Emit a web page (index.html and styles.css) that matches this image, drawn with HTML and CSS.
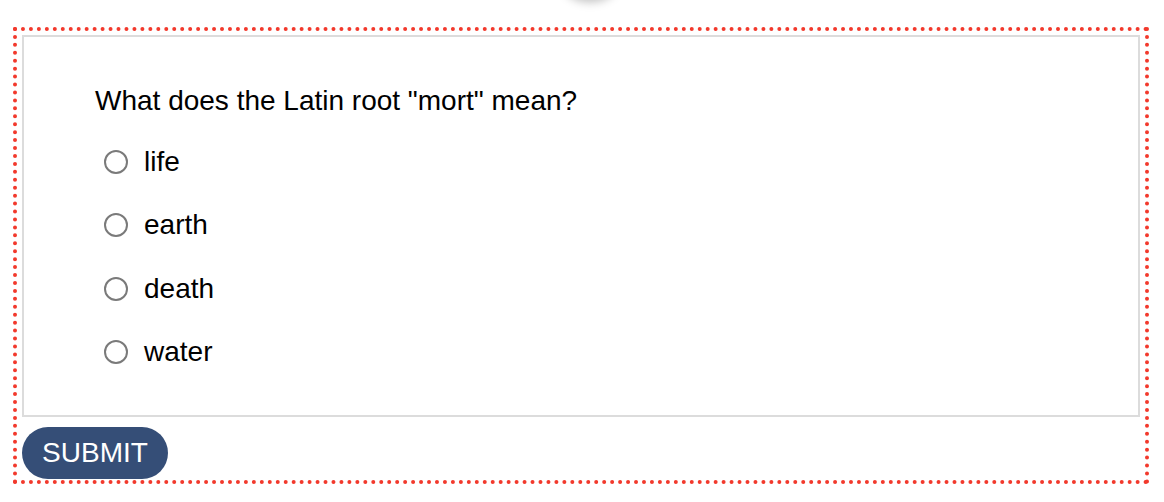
FILE: index.html
```html
<!DOCTYPE html>
<html lang="en">
<head>
  <meta charset="UTF-8">
  <meta name="viewport" content="width=device-width, initial-scale=1.0">
  <title>Quiz</title>
  <link rel="stylesheet" href="styles.css">
</head>
<body>
  <div class="top-shadow"></div>
  <form class="quiz">
    <div class="question-box">
      <p class="question">What does the Latin root "mort" mean?</p>
      <ul class="options">
        <li><label><input type="radio" name="mort" value="life"> life</label></li>
        <li><label><input type="radio" name="mort" value="earth"> earth</label></li>
        <li><label><input type="radio" name="mort" value="death"> death</label></li>
        <li><label><input type="radio" name="mort" value="water"> water</label></li>
      </ul>
    </div>
    <button type="button" class="submit">SUBMIT</button>
  </form>
</body>
</html>
```

FILE: styles.css
```css
body {
  font-family: "Liberation Sans", Arial, sans-serif;
  margin: 0;
  padding: 0;
  background-color: #fff;
  color: #000;
}
.top-shadow {
  position: absolute;
  left: 562px;
  top: -40px;
  width: 56px;
  height: 40px;
  border-radius: 50%;
  box-shadow: 0 2px 10px rgba(0, 0, 0, 0.25);
}
.quiz {
  margin: 27px 15px 0 13px;
  border: 4px dotted #f2392c;
  padding: 4px 5px 1px 5px;
}
.question-box {
  border: 2px solid #dcdcdc;
  padding: 48px 20px 47px 71px;
}
.question {
  margin: 0;
  font-size: 28px;
  line-height: 32px;
}
.options {
  list-style-type: none;
  margin: 29px 0 0 0;
  padding: 0;
  display: flex;
  flex-direction: column;
  gap: 31.4px;
}
.options label {
  display: flex;
  align-items: center;
  height: 32px;
  font-size: 28px;
}
.options input[type="radio"] {
  appearance: none;
  -webkit-appearance: none;
  width: 24px;
  height: 24px;
  margin: 0 16px 0 9px;
  border: 2px solid #7a7a7a;
  border-radius: 50%;
  background-color: #fff;
}
.submit {
  display: block;
  margin-top: 10px;
  width: 146px;
  height: 52px;
  padding: 0;
  border: none;
  border-radius: 26px;
  background-color: #354e77;
  color: #fff;
  font-family: "Liberation Sans", Arial, sans-serif;
  font-size: 28px;
  cursor: pointer;
}
```
